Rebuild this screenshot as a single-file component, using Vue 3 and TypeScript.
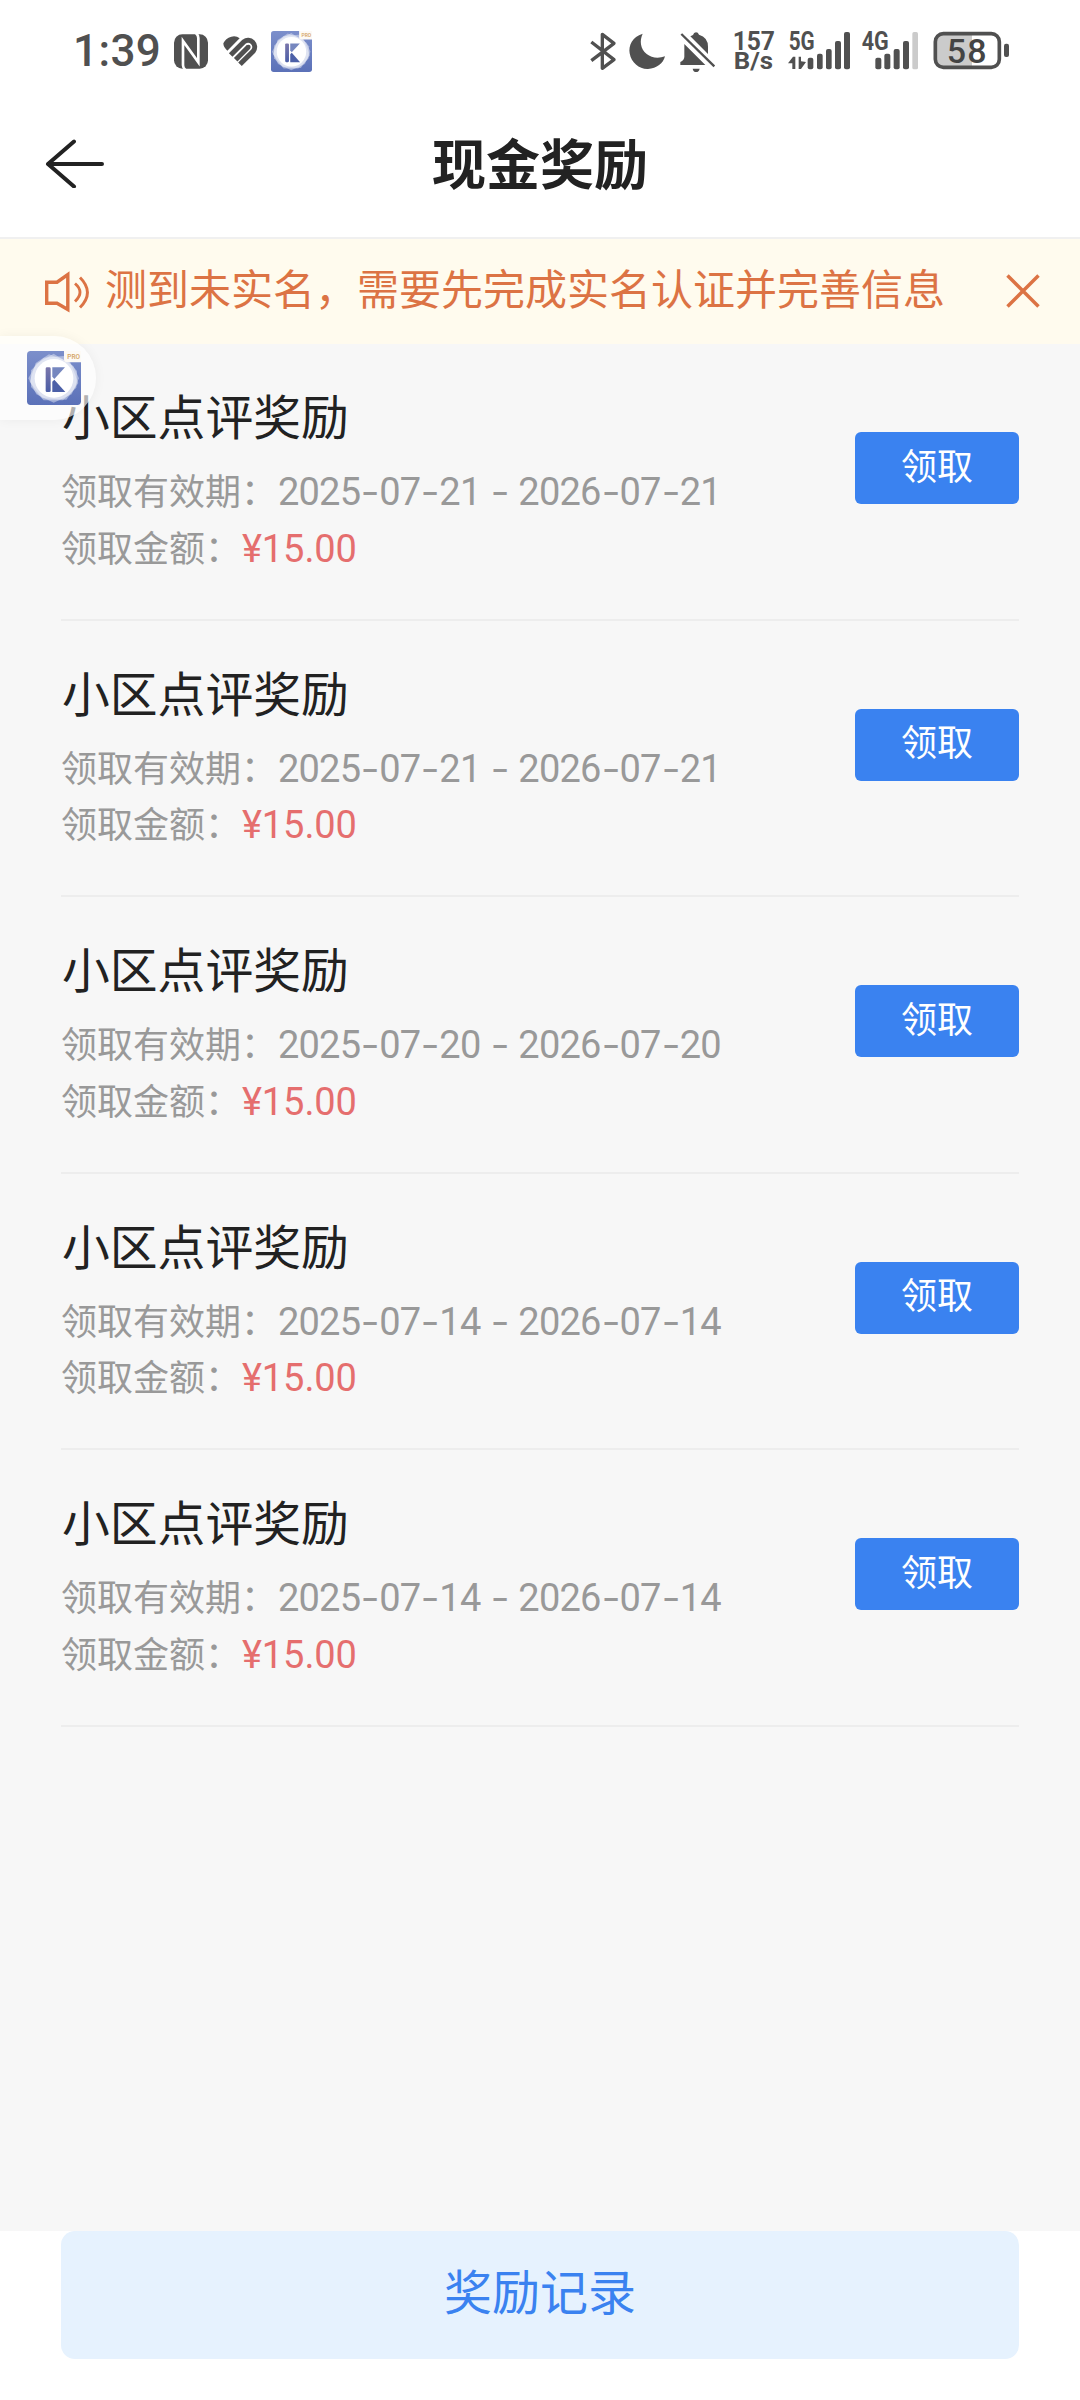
<script setup lang="ts">
interface Reward {
  title: string
  from: string
  to: string
  amount: string
}

const rewards: Reward[] = [
  { title: '小区点评奖励', from: '2025-07-21', to: '2026-07-21', amount: '15.00' },
  { title: '小区点评奖励', from: '2025-07-21', to: '2026-07-21', amount: '15.00' },
  { title: '小区点评奖励', from: '2025-07-20', to: '2026-07-20', amount: '15.00' },
  { title: '小区点评奖励', from: '2025-07-14', to: '2026-07-14', amount: '15.00' },
  { title: '小区点评奖励', from: '2025-07-14', to: '2026-07-14', amount: '15.00' },
]

const rangeParts = (r: Reward): string[] => `${r.from} - ${r.to}`.split(/(-)/)
</script>

<template>
  <div class="screen" lang="zh-CN">
    <svg class="defs" width="0" height="0">
      <defs>
        <linearGradient id="appBg" x1="0" y1="0" x2="0" y2="1">
          <stop offset="0" stop-color="#7c8fcb" />
          <stop offset="1" stop-color="#5b71b8" />
        </linearGradient>
        <linearGradient id="barBg" x1="0" y1="0" x2="0" y2="1">
          <stop offset="0" stop-color="#7b77ab" />
          <stop offset="1" stop-color="#4a5da6" />
        </linearGradient>
        <symbol id="k-pro" viewBox="0 0 162 162">
          <rect width="162" height="162" rx="11" fill="url(#appBg)" />
          <g fill="#fff" fill-opacity=".4">
            <path d="M80 8 139 45 156 82 134 130 80 155 28 130 4 82 28 38Z" />
            <path d="M50 20 110 15 150 60 148 110 108 148 50 148 12 108 12 58Z" />
            <path d="M66 10 130 34 154 96 118 146 46 142 8 92 26 36Z" />
          </g>
          <circle cx="81" cy="82" r="58" fill="#fff" />
          <rect x="56" y="49" width="15" height="74" rx="4" fill="url(#barBg)" />
          <path d="M76 49H114L82 84 76 77Z" fill="#7687bf" />
          <path d="M82 86 115 123H76V92Z" fill="#4c60a8" />
          <path d="M111 0H162V34H121Q111 34 111 24Z" fill="#fdfaf5" />
          <text x="121" y="25" font-size="19" font-weight="500" fill="#d3a25d" textLength="38" lengthAdjust="spacingAndGlyphs">PRO</text>
        </symbol>
      </defs>
    </svg>

    <header class="status">
      <span class="time">1:39</span>
      <svg class="nfc" viewBox="339 0 108 210" width="36" height="70">
        <rect x="342" y="43" width="102" height="103" rx="25" fill="#505050" />
        <path d="M376 150Q369 144 369 136V63L415 127V54Q415 46 408 40" fill="none" stroke="#fff" stroke-width="8" />
      </svg>
      <svg class="heart" viewBox="486 0 114 210" width="38" height="70" fill="none" stroke="#505050" stroke-width="15">
        <path d="M502 92 539 55Q528 46 514 50 496 55 490 70 490 82 502 92Z" fill="#505050" stroke="none" />
        <path d="M512 105 552 65A20 20 0 0 1 580 93L540 133" />
        <path d="M527 119 565 81" stroke-linecap="butt" />
        <circle cx="565" cy="81" r="7" fill="#505050" stroke="none" />
      </svg>
      <svg class="mini" width="41" height="41"><use href="#k-pro" /></svg>

      <div class="right">
        <svg viewBox="60 0 81 210" width="27" height="70" fill="none" stroke="#505050" stroke-width="10" stroke-linejoin="round">
          <path d="M64 66 132 119 97 145V43L132 70 64 122" />
        </svg>
        <svg class="moon" viewBox="174 0 114 210" width="38" height="70">
          <path d="M218 41C187 50 175 76 179 100 184 129 208 148 234 147 260 146 280 130 285 109 266 116 244 114 230 102 211 86 208 62 218 41Z" fill="#505050" />
        </svg>
        <svg class="bell" viewBox="327 0 111 210" width="37" height="70">
          <path d="M343 72 406 135H331V126Q343 120 343 110Z" fill="#505050" />
          <path d="M361 49Q364 47 369 45 371 37 378 37 384 37 387 44 414 52 414 80V102Z" fill="#505050" />
          <path d="M334 42 433 139" stroke="#505050" stroke-width="7" />
          <path d="M368 146H389Q387 156 378 156 370 156 368 146Z" fill="#505050" />
        </svg>
        <svg class="rate" viewBox="486 0 129 210" width="43" height="70" fill="#505050" font-weight="700">
          <text x="488" y="90" font-size="76" textLength="127" lengthAdjust="spacingAndGlyphs">157</text>
          <text x="491" y="148" font-size="74" textLength="118" lengthAdjust="spacingAndGlyphs">B/s</text>
        </svg>
        <svg class="sig" viewBox="51 0 192 210" width="64" height="70" fill="#505050">
          <text x="56" y="90" font-size="76" font-weight="700" textLength="78" lengthAdjust="spacingAndGlyphs">5G</text>
          <path d="M54 130 69 110H76V147H67V130ZM86 110H93V124L108 126 93 147H86Z" />
          <rect x="113" y="113" width="17" height="35" rx="6" />
          <rect x="141" y="101" width="17" height="47" rx="6" />
          <rect x="168" y="87" width="17" height="61" rx="6" />
          <rect x="195" y="63" width="18" height="85" rx="6" />
          <rect x="222" y="36" width="18" height="112" rx="6" />
        </svg>
        <svg class="sig2" viewBox="273 0 174 210" width="58" height="70" fill="#505050">
          <text x="275" y="90" font-size="76" font-weight="700" textLength="81" lengthAdjust="spacingAndGlyphs">4G</text>
          <rect x="316" y="113" width="18" height="35" rx="6" />
          <rect x="343" y="101" width="18" height="47" rx="6" />
          <rect x="371" y="87" width="18" height="61" rx="6" />
          <rect x="399" y="63" width="18" height="85" rx="6" />
          <rect x="427" y="36" width="17" height="112" rx="5" fill="#cbcbcb" />
        </svg>
        <svg class="batt" viewBox="486 0 234 210" width="78" height="70">
          <path d="M606 42H520Q497 42 497 65V118Q497 141 520 141H606Z" fill="#cbcbcb" />
          <rect x="496" y="41" width="192" height="101" rx="24" fill="none" stroke="#505050" stroke-width="11" />
          <rect x="702" y="71" width="15" height="40" rx="6" fill="#505050" />
          <text x="530" y="128" font-size="102" font-weight="500" fill="#444" textLength="120" lengthAdjust="spacing">58</text>
        </svg>
      </div>
    </header>

    <nav class="nav">
      <svg class="back" width="60" height="50" viewBox="0 0 60 50" fill="none" stroke="#222" stroke-width="4" stroke-linecap="round" stroke-linejoin="round">
        <path d="M30 3.500 4 26 30 48.500M4 26H58" />
      </svg>
      <h1>现金奖励</h1>
    </nav>

    <section class="notice">
      <svg width="46" height="42" viewBox="0 0 46 42" fill="none" stroke="#dc7344" stroke-width="3.4">
        <path d="M2.700 11.200H13L23.800 3.500V38.500L13 32.200H2.700Z" />
        <path d="M31 12.500Q41 21 31 30.500M36 6.500Q51 21.500 36 36.500" stroke-width="2.900" />
      </svg>
      <p>测到未实名，需要先完成实名认证并完善信息</p>
      <svg class="close" width="34" height="34" viewBox="0 0 34 34" fill="none" stroke="#dc7344" stroke-width="3.500">
        <path d="M1.500 1.500 32.500 32.500M32.500 1.500 1.500 32.500" />
      </svg>
    </section>

    <main class="list">
      <article v-for="(r, i) in rewards" :key="i" class="row">
        <div class="info">
          <h2>{{ r.title }}</h2>
          <p>
            <span class="label wide">领取有效期：</span><span class="num"><template v-for="(p, k) in rangeParts(r)" :key="k"><i v-if="p === '-'" class="dash">-</i><template v-else>{{ p }}</template></template></span>
          </p>
          <p>
            <span class="label">领取金额：</span><span class="num money">¥{{ r.amount }}</span>
          </p>
        </div>
        <button type="button">领取</button>
      </article>
    </main>

    <footer class="footer">
      <button type="button">奖励记录</button>
    </footer>

    <div class="float">
      <svg width="54" height="54"><use href="#k-pro" /></svg>
    </div>
  </div>
</template>

<style>
body {
  margin: 0;
  background: #fff;
}
</style>

<style scoped>
.screen {
  position: relative;
  display: flex;
  flex-direction: column;
  width: 1080px;
  height: 2400px;
  overflow: hidden;
  background: #fff;
  color: #222;
  font-family: Roboto, 'Noto Sans CJK SC', sans-serif;
}
.defs {
  position: absolute;
}
svg {
  display: block;
  flex: none;
}
h1,
h2,
p {
  margin: 0;
  font-weight: 400;
  white-space: nowrap;
}
button {
  border: 0;
  padding: 0;
  font-family: inherit;
}
.status {
  display: flex;
  box-sizing: border-box;
  height: 90px;
  padding: 20px 70px 0 73px;
}
.time {
  width: 100px;
  color: #505050;
  font-size: 44px;
  font-weight: 500;
  line-height: 63px;
  letter-spacing: 0.4px;
}
.heart {
  margin-left: 13px;
}
.mini {
  margin: 11px 0 0 11px;
}
.right {
  display: flex;
  margin-left: auto;
}
.moon {
  margin-left: 11px;
}
.bell {
  margin-left: 13px;
}
.rate {
  margin-left: 16px;
}
.sig {
  margin-left: 12px;
}
.sig2 {
  margin-left: 10px;
}
.batt {
  margin-left: 13px;
}
.nav {
  display: grid;
  grid-template-columns: 60px 1fr 60px;
  align-items: center;
  box-sizing: border-box;
  height: 149px;
  padding: 0 44px;
  border-bottom: 2px solid #f0f0f0;
}
.nav h1 {
  margin-top: -3px;
  font-family: 'Noto Sans CJK SC', sans-serif;
  font-size: 54px;
  font-weight: 700;
  line-height: 80px;
  text-align: center;
}
.back {
  margin-top: -1px;
}
.notice {
  display: flex;
  align-items: center;
  box-sizing: border-box;
  height: 105px;
  padding: 0 40px 0 44px;
  background: #fffbee;
  color: #dc7344;
}
.notice p {
  margin: -10px 0 0 15px;
  font-family: 'Noto Sans CJK SC', sans-serif;
  font-size: 42px;
  line-height: 60px;
}
.close {
  margin: -1px 0 0 auto;
}
.list {
  flex: 1;
  padding: 0 61px;
  background: #f7f7f7;
}
.row {
  display: flex;
  justify-content: space-between;
  box-sizing: border-box;
  height: 276.5px;
  padding-top: 37px;
  border-bottom: 2px solid #ededed;
}
.row h2 {
  margin-bottom: 12px;
  padding-left: 1px;
  font-family: 'Noto Sans CJK SC', sans-serif;
  font-size: 47.8px;
  line-height: 68px;
}
.row p {
  display: flex;
  height: 56.5px;
  color: #999;
  font-size: 36px;
  line-height: 56px;
}
.label {
  width: 181px;
  font-family: 'Noto Sans CJK SC', sans-serif;
}
.label.wide {
  width: 217px;
}
.num {
  padding-top: 3px;
  font-size: 38px;
  letter-spacing: -0.8px;
  word-spacing: 0.8px;
  white-space: pre;
}
.dash {
  display: inline-block;
  width: 19px;
  font-style: normal;
  text-align: center;
  transform: scaleX(1.45);
}
.money {
  color: #e56e6e;
  letter-spacing: -0.1px;
}
.row button {
  width: 164px;
  height: 72px;
  margin-top: 51px;
  padding-bottom: 9px;
  border-radius: 6px;
  background: #3a82f0;
  color: #fff;
  font-size: 36px;
}
.footer {
  height: 169px;
  padding: 0 61px;
}
.footer button {
  display: block;
  width: 100%;
  height: 128px;
  padding-bottom: 12px;
  border-radius: 14px;
  background: #e6f2fe;
  color: #3a82f0;
  font-size: 48px;
}
.float {
  position: absolute;
  left: 0;
  top: 336px;
  box-sizing: border-box;
  width: 96px;
  height: 84px;
  padding: 15px 0 0 27px;
  border-radius: 0 42px 42px 0;
  background: rgba(255, 255, 255, 0.65);
  box-shadow: 0 0 12px rgba(0, 0, 0, 0.05);
}
</style>
